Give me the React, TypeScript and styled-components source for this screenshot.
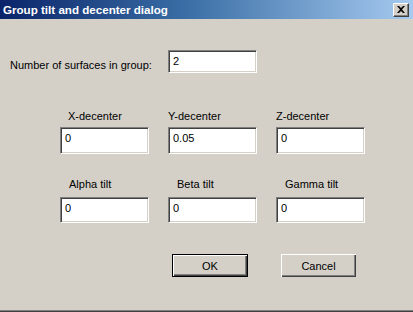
import React from "react";
import styled, { createGlobalStyle } from "styled-components";

const GlobalStyle = createGlobalStyle`
  html, body {
    margin: 0;
    padding: 0;
    background: #d4d0c8;
  }
  body {
    font-family: "Liberation Sans", Arial, sans-serif;
    font-size: 11px;
    color: #000;
  }
`;

const Window = styled.div`
  width: 413px;
  height: 312px;
  box-sizing: border-box;
  background: #d4d0c8;
  display: flex;
  flex-direction: column;
  border-bottom: 1px solid #404040;
  box-shadow: inset 0 -1px 0 #808080;
  overflow: hidden;
`;

const TitleBar = styled.div`
  height: 19px;
  flex: none;
  display: flex;
  align-items: center;
  justify-content: space-between;
  padding: 0 4px 0 3px;
  background: linear-gradient(to right, #0a246a 0%, #3a6ea5 45%, #a6caf0 100%);
`;

const Title = styled.div`
  color: #fff;
  font-weight: bold;
  font-size: 11.6px;
`;

const CloseButton = styled.div`
  width: 16px;
  height: 14px;
  box-sizing: border-box;
  background: #d4d0c8;
  border-top: 1px solid #fff;
  border-left: 1px solid #fff;
  border-right: 1px solid #404040;
  border-bottom: 1px solid #404040;
  box-shadow: inset -1px -1px 0 #808080;
  display: flex;
  align-items: center;
  justify-content: center;
`;

const Body = styled.div`
  display: flex;
  flex-direction: column;
  padding: 31px 0 0 0;
`;

const CountRow = styled.div`
  display: flex;
  align-items: center;
  padding-left: 10px;
`;

const CountLabel = styled.div`
  width: 158px;
  padding-top: 6px;
`;

const TextBox = styled.div<{ $w: number; $h: number }>`
  width: ${(p) => p.$w}px;
  height: ${(p) => p.$h}px;
  box-sizing: border-box;
  background: #fff;
  border-top: 1px solid #808080;
  border-left: 1px solid #808080;
  border-right: 1px solid #fff;
  border-bottom: 1px solid #fff;
  box-shadow: inset 1px 1px 0 #404040, inset -1px -1px 0 #d4d0c8;
  padding: 4px 0 0 4px;
  line-height: 13px;
`;

const Grid = styled.div<{ $top: number }>`
  display: grid;
  grid-template-columns: repeat(3, 89px);
  column-gap: 19px;
  margin-left: 60px;
  margin-top: ${(p) => p.$top}px;
`;

const Field = styled.div<{ $gap: number }>`
  display: flex;
  flex-direction: column;
  gap: ${(p) => p.$gap}px;
`;

const FieldLabel = styled.div<{ $indent: number }>`
  height: 13px;
  line-height: 13px;
  padding-left: ${(p) => p.$indent}px;
`;

const ButtonRow = styled.div`
  display: flex;
  gap: 33px;
  margin: 31px 0 0 172px;
`;

const Button = styled.div<{ $default?: boolean }>`
  width: ${(p) => (p.$default ? 76 : 75)}px;
  height: 23px;
  box-sizing: border-box;
  display: flex;
  align-items: center;
  justify-content: center;
  background: #d4d0c8;
  border: ${(p) => (p.$default ? "1px solid #000" : "none")};
  box-shadow: inset 1px 1px 0 #fff, inset -1px -1px 0 #404040,
    inset -2px -2px 0 #808080;
`;

type FieldDef = { label: string; value: string; indent: number };

const decenters: FieldDef[] = [
  { label: "X-decenter", value: "0", indent: 8 },
  { label: "Y-decenter", value: "0.05", indent: 0 },
  { label: "Z-decenter", value: "0", indent: 0 },
];

const tilts: FieldDef[] = [
  { label: "Alpha tilt", value: "0", indent: 9 },
  { label: "Beta tilt", value: "0", indent: 9 },
  { label: "Gamma tilt", value: "0", indent: 9 },
];

export default function App() {
  return (
    <Window>
      <GlobalStyle />
      <TitleBar>
        <Title>Group tilt and decenter dialog</Title>
        <CloseButton>
          <svg width="8" height="7" viewBox="0 0 8 7">
            <path d="M0 0h2l2 2 2-2h2L5 3.5 8 7H6L4 5 2 7H0l3-3.5z" fill="#000" />
          </svg>
        </CloseButton>
      </TitleBar>
      <Body>
        <CountRow>
          <CountLabel>Number of surfaces in group:</CountLabel>
          <TextBox $w={89} $h={23}>2</TextBox>
        </CountRow>
        <Grid $top={37}>
          {decenters.map((f) => (
            <Field key={f.label} $gap={4}>
              <FieldLabel $indent={f.indent}>{f.label}</FieldLabel>
              <TextBox $w={89} $h={27}>{f.value}</TextBox>
            </Field>
          ))}
        </Grid>
        <Grid $top={24}>
          {tilts.map((f) => (
            <Field key={f.label} $gap={6}>
              <FieldLabel $indent={f.indent}>{f.label}</FieldLabel>
              <TextBox $w={89} $h={26}>{f.value}</TextBox>
            </Field>
          ))}
        </Grid>
        <ButtonRow>
          <Button $default>OK</Button>
          <Button>Cancel</Button>
        </ButtonRow>
      </Body>
    </Window>
  );
}
